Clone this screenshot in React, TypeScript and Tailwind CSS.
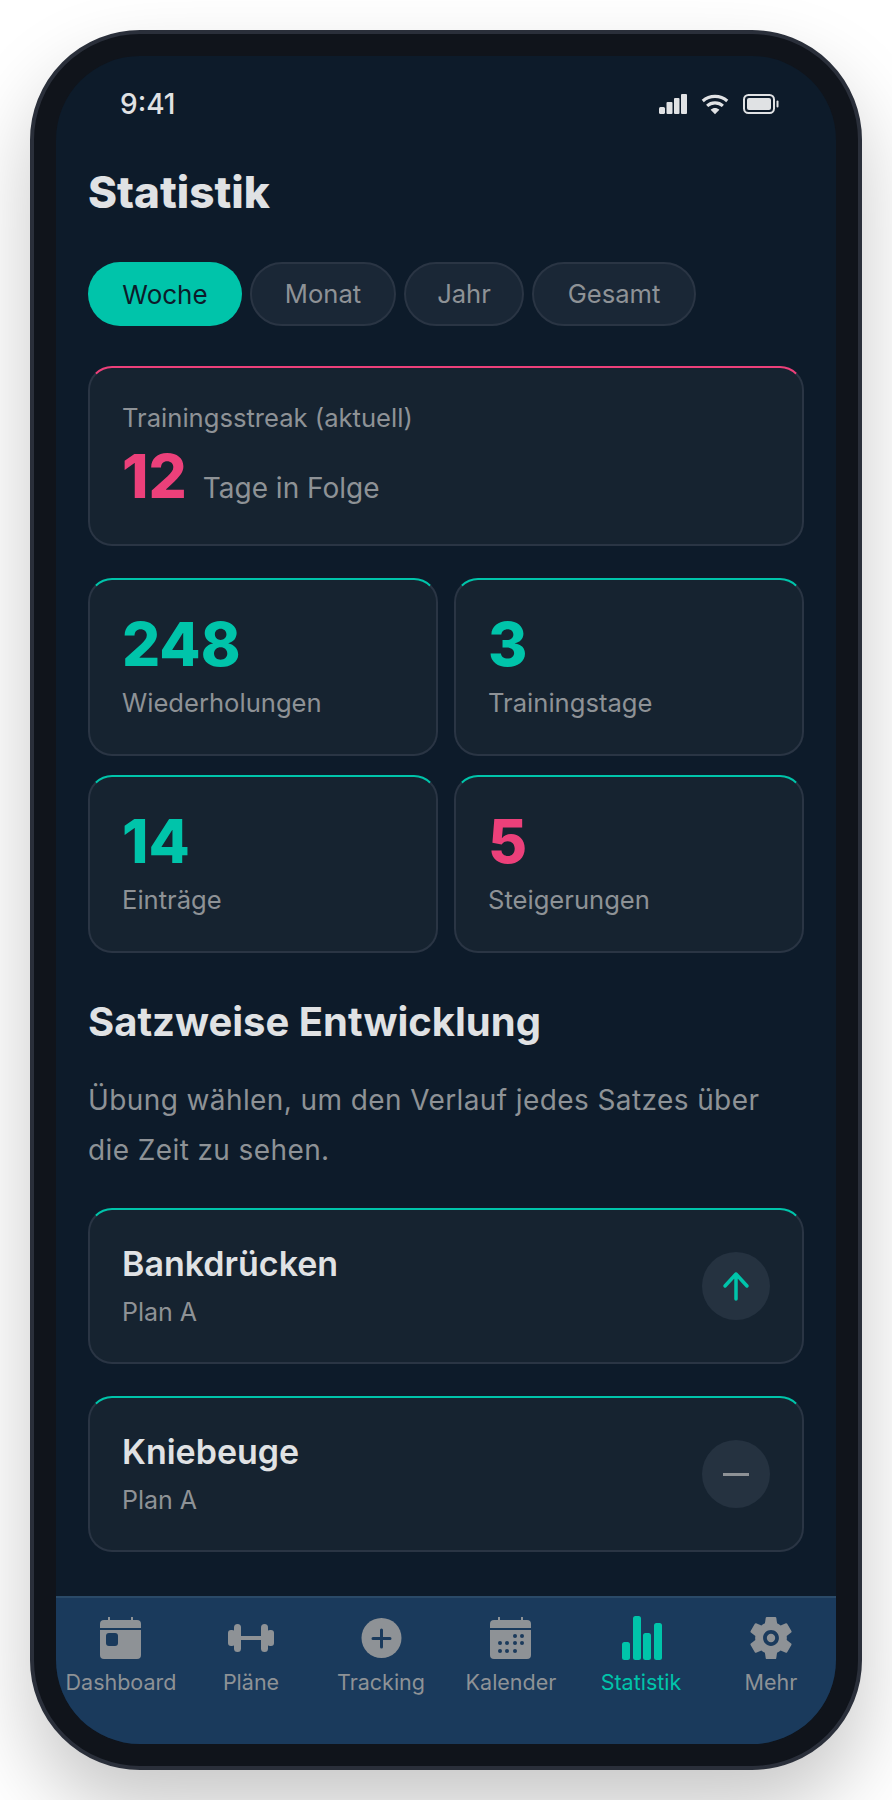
import type { ReactNode } from 'react';

const body = "font-['Inter',sans-serif]";

function CalendarBase({ children }: { children: ReactNode }) {
  return (
    <svg width="44" height="44" viewBox="0 0 44 44" fill="#8e9296">
      <path d="M9 1h2v4H9zM32 1h2v4h-2z" />
      <path d="M1 8a4 4 0 0 1 4-4h33a4 4 0 0 1 4 4v4H1z" />
      <path d="M1 14h41v25a4 4 0 0 1-4 4H5a4 4 0 0 1-4-4z" />
      {children}
    </svg>
  );
}

const icons: Record<string, ReactNode> = {
  Dashboard: (
    <CalendarBase>
      <rect x="7" y="17" width="12" height="13" rx="3" fill="#1a3a5c" />
    </CalendarBase>
  ),
  Pläne: (
    <svg width="46" height="44" viewBox="0 0 46 44" fill="#8e9296">
      <rect x="0" y="14" width="7" height="16" rx="3" />
      <rect x="6" y="8" width="7" height="28" rx="3.5" />
      <rect x="13" y="20" width="20" height="4" />
      <rect x="33" y="8" width="7" height="28" rx="3.5" />
      <rect x="39" y="14" width="7" height="16" rx="3" />
    </svg>
  ),
  Tracking: (
    <svg width="44" height="44" viewBox="0 0 44 44">
      <circle cx="22.500" cy="22" r="20" fill="#8e9296" />
      <path d="M22.500 14v17M14 22.500h17" stroke="#1a3a5c" strokeWidth="3" strokeLinecap="round" />
    </svg>
  ),
  Kalender: (
    <CalendarBase>
      <g fill="#1a3a5c">
        <circle cx="26" cy="20" r="2" /><circle cx="33" cy="20" r="2" />
        <circle cx="11" cy="27" r="2" /><circle cx="18" cy="27" r="2" /><circle cx="26" cy="27" r="2" /><circle cx="33" cy="27" r="2" />
        <circle cx="11" cy="35" r="2" /><circle cx="18" cy="35" r="2" /><circle cx="26" cy="35" r="2" />
      </g>
    </CalendarBase>
  ),
  Statistik: (
    <svg width="44" height="44" viewBox="0 0 44 44" fill="#00c4aa">
      <rect x="3" y="26" width="8" height="18" rx="2.500" />
      <rect x="14" y="0" width="8" height="44" rx="2.500" />
      <rect x="24" y="17" width="8" height="27" rx="2.500" />
      <rect x="35" y="7" width="8" height="37" rx="2.500" />
    </svg>
  ),
  Mehr: (
    <svg width="44" height="44" viewBox="2 2 20 20" fill="#8e9296">
      <path d="M19.140 12.940c.04-.3.06-.61.06-.94 0-.32-.02-.64-.07-.94l2.030-1.580a.49.49 0 0 0 .12-.61l-1.920-3.320a.49.49 0 0 0-.59-.22l-2.390.96c-.5-.38-1.030-.7-1.620-.94l-.36-2.540a.48.48 0 0 0-.48-.41h-3.840c-.24 0-.43.17-.47.41l-.36 2.540c-.59.24-1.130.57-1.620.94l-2.390-.96c-.22-.08-.47 0-.59.22L2.740 8.870c-.12.21-.08.47.12.61l2.030 1.580c-.05.3-.09.63-.09.94s.02.64.07.94l-2.030 1.580a.49.49 0 0 0-.12.61l1.920 3.320c.12.22.37.29.59.22l2.390-.96c.5.38 1.030.7 1.620.94l.36 2.540c.05.24.24.41.48.41h3.840c.24 0 .44-.17.47-.41l.36-2.540c.59-.24 1.130-.56 1.620-.94l2.390.96c.22.08.47 0 .59-.22l1.920-3.320c.12-.22.07-.47-.12-.61l-2.010-1.580zM12 15.600c-1.980 0-3.600-1.620-3.600-3.600s1.620-3.600 3.600-3.600 3.600 1.620 3.600 3.600-1.620 3.600-3.600 3.600z" />
      <circle cx="12" cy="12" r="1.900" />
    </svg>
  ),
};

function StatCard({ value, label, pink }: { value: string; label: string; pink?: boolean }) {
  return (
    <div className="h-[178px] rounded-3xl border-2 border-[#2a3544] border-t-[#00c4aa] bg-[#162330] px-8 pt-8">
      <div className={`font-['Inter',sans-serif] text-[60px] font-extrabold leading-[64px] ${pink ? 'text-[#ec407a]' : 'text-[#00c4aa]'}`}>{value}</div>
      <div className={`${body} mt-[9px] text-[25.6px] leading-9 text-[#8e9296]`}>{label}</div>
    </div>
  );
}

function ExerciseCard({ name, up }: { name: string; up?: boolean }) {
  return (
    <div className="flex h-[156px] items-center justify-between rounded-3xl border-2 border-[#2a3544] border-t-[#00c4aa] bg-[#162330] px-8">
      <div>
        <div className="font-['Inter',sans-serif] text-[34px] font-semibold leading-10 text-[#e0e2e4]">{name}</div>
        <div className={`${body} mt-3 text-[25px] leading-8 text-[#8e9296]`}>Plan A</div>
      </div>
      <div className="flex h-[68px] w-[68px] items-center justify-center rounded-full bg-[#253240]">
        {up ? (
          <svg width="28" height="30" viewBox="0 0 28 30" fill="none" stroke="#00c4aa" strokeWidth="3.5" strokeLinecap="round" strokeLinejoin="round">
            <path d="M14 28V3M3 15L14 3l11 12" />
          </svg>
        ) : (
          <div className="h-[3px] w-[26px] bg-[#8e9296]" />
        )}
      </div>
    </div>
  );
}

export default function App() {
  const tabs = ['Monat', 'Jahr', 'Gesamt'];
  const nav = ['Dashboard', 'Pläne', 'Tracking', 'Kalender', 'Statistik', 'Mehr'];

  return (
    <div className="h-[1800px] w-[892px] overflow-hidden bg-white pl-[30px] pt-[30px]">
      <div className="h-[1740px] w-[832px] rounded-[110px] border-4 border-[#2a2f3a] bg-[#10141b] p-[22px] shadow-[0_40px_80px_rgba(0,0,0,0.22)]">
        <div className="flex h-full flex-col overflow-hidden rounded-[84px] bg-[#0d1b2a]">
          <div className="flex-1 px-8">
            <div className="mt-[30px] flex h-[36px] items-center justify-between pl-8 pr-[25px]">
              <span className="font-['Inter',sans-serif] text-[28px] font-medium text-[#e0e2e4]">9:41</span>
              <div className="flex items-center gap-[13px]">
                <svg width="28" height="21" viewBox="0 0 28 21" fill="#e0e2e4">
                  <rect x="0" y="13" width="6" height="7" rx="1.500" /><rect x="7.500" y="8" width="6" height="12" rx="1" /><rect x="15" y="4" width="5.500" height="16" rx="1" /><rect x="22" y="0" width="6" height="20" rx="1" />
                </svg>
                <svg width="30" height="21" viewBox="0 0 30 24" fill="none" stroke="#e0e2e4" strokeWidth="3.600">
                  <path d="M1 8c8-7 20-7 28 0M6 13.500c5-4.500 13-4.500 18 0" />
                  <path d="M15 23l-5-5c3-2.500 7-2.500 10 0z" fill="#e0e2e4" stroke="none" />
                </svg>
                <svg width="36" height="20" viewBox="0 0 36 20">
                  <rect x="1" y="1" width="30" height="18" rx="4.500" fill="none" stroke="#e0e2e4" strokeWidth="2" />
                  <rect x="4" y="4" width="24" height="12" rx="2" fill="#e0e2e4" />
                  <rect x="33.500" y="6.500" width="2" height="7" rx="1" fill="#e0e2e4" />
                </svg>
              </div>
            </div>

            <h1 className="mt-11 font-['Inter',sans-serif] text-[44px] font-extrabold leading-[52px] text-[#e0e2e4]">Statistik</h1>

            <div className="mt-11 flex gap-2">
              <div className={`${body} flex h-16 w-[154px] items-center justify-center rounded-full bg-[#00c4aa] text-[26px] text-[#0d1b2a]`}>Woche</div>
              {tabs.map((t, i) => (
                <div key={t} className={`${body} flex h-16 items-center justify-center rounded-full border-2 border-[#2a3544] bg-[#1a2736] text-[25.6px] text-[#8e9296] ${i === 0 ? 'w-[146px]' : i === 1 ? 'w-[120px]' : 'w-[164px]'}`}>{t}</div>
              ))}
            </div>

            <div className="mt-10 h-[180px] rounded-3xl border-2 border-[#2a3544] border-t-[#ec407a] bg-[#162330] px-8 pt-8">
              <div className={`${body} text-[25.6px] leading-9 text-[#8e9296]`}>Trainingsstreak (aktuell)</div>
              <div className="mt-[6px] flex items-baseline gap-4">
                <span className="font-['Inter',sans-serif] text-[60px] font-extrabold leading-[68px] text-[#ec407a]">12</span>
                <span className={`${body} text-[28px] text-[#8e9296]`}>Tage in Folge</span>
              </div>
            </div>

            <div className="mt-8 grid grid-cols-2 gap-x-4 gap-y-[19px]">
              <StatCard value="248" label="Wiederholungen" />
              <StatCard value="3" label="Trainingstage" />
              <StatCard value="14" label="Einträge" />
              <StatCard value="5" label="Steigerungen" pink />
            </div>

            <h2 className="mt-[45px] font-['Inter',sans-serif] text-[40px] font-bold leading-[48px] text-[#e0e2e4]">Satzweise Entwicklung</h2>
            <p className={`${body} mt-[29px] max-w-[680px] text-[28px] leading-[50px] tracking-[0.4px] text-[#8e9296]`}>Übung wählen, um den Verlauf jedes Satzes über die Zeit zu sehen.</p>

            <div className="mt-[33px] flex flex-col gap-8">
              <ExerciseCard name="Bankdrücken" up />
              <ExerciseCard name="Kniebeuge" />
            </div>
          </div>

          <nav className="grid h-[148px] grid-cols-6 border-t-2 border-[#2a4a68] bg-[#1a3a5c] pt-[18px]">
            {nav.map((n) => (
              <div key={n} className="flex flex-col items-center">
                <div className="flex h-[46px] items-start justify-center">{icons[n]}</div>
                <span className={`${body} mt-[6px] text-[21.5px] leading-7 ${n === 'Statistik' ? 'text-[#00c4aa]' : 'text-[#8e9296]'}`}>{n}</span>
              </div>
            ))}
          </nav>
        </div>
      </div>
    </div>
  );
}
